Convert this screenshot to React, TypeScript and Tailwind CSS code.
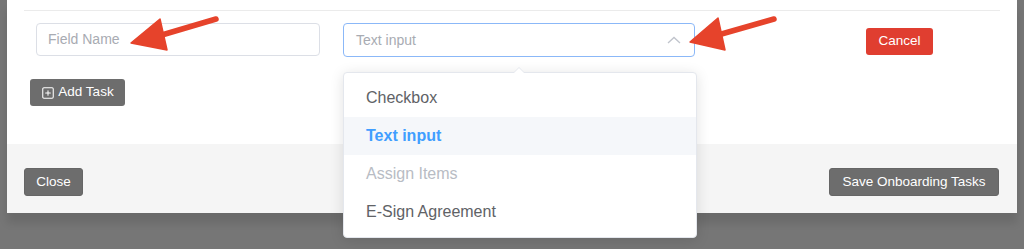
import { SquarePlus } from "lucide-react";

const font = { fontFamily: '"Liberation Sans", Arial, sans-serif' };

function Arrow({ tail, tip, left, right }: { tail: [number, number]; tip: [number, number]; left: [number, number]; right: [number, number] }) {
    const midX = (left[0] + right[0]) / 2;
    const midY = (left[1] + right[1]) / 2;
    return (
        <g fill="#e6432b" stroke="#e6432b">
            <line x1={tail[0]} y1={tail[1]} x2={midX} y2={midY} strokeWidth={5.5} strokeLinecap="round" />
            <polygon points={`${tip[0]},${tip[1]} ${left[0]},${left[1]} ${right[0]},${right[1]}`} strokeWidth={1.5} strokeLinejoin="round" />
        </g>
    );
}

export default function App() {
    return (
        <div className="relative h-[249px] w-[1024px] overflow-hidden bg-[#767676]" style={font}>
            {/* modal */}
            <div className="ml-[7px] w-[1010px] bg-white shadow-[0_10px_8px_rgba(0,0,0,0.1)]">
                <div className="px-[17px] pb-[38px]">
                    <div className="pt-[10px]">
                        <div className="h-px bg-[#ebebeb]" />
                    </div>
                    <div className="mt-[12px] flex items-start">
                        <div className="ml-[12px] flex h-[33px] w-[284px] items-center rounded-[4px] border border-[#dcdfe6] px-[11px] text-[14px] text-[#a8abb2]">
                            Field Name
                        </div>
                        <div className="ml-[23px] flex h-[34px] w-[352px] items-center justify-between rounded-[4px] border border-[#8bb8f8] pl-[12px] pr-[12px] text-[14px] text-[#a8abb2]">
                            <span>Text input</span>
                            <svg width="14" height="8" viewBox="0 0 14 8" className="mr-[1px]">
                                <polyline points="1,7 7,1.5 13,7" fill="none" stroke="#c0c4cc" strokeWidth="1.3" />
                            </svg>
                        </div>
                        <button
                            type="button"
                            className="ml-[171px] mt-[5px] flex h-[27px] w-[67px] items-center justify-center rounded-[3px] bg-[#e03e30] text-[13.5px] text-white"
                        >
                            Cancel
                        </button>
                    </div>
                    <button
                        type="button"
                        className="ml-[6px] mt-[22px] flex h-[27px] w-[95px] items-center justify-center gap-[3px] rounded-[3px] bg-[#6d6d6d] text-[13.5px] text-white"
                    >
                        <SquarePlus className="size-[14px]" strokeWidth={1.8} />
                        Add Task
                    </button>
                </div>
                <div className="flex h-[69px] items-start justify-between bg-[#f5f5f5] px-[17px] pr-[18px] pt-[24px]">
                    <button
                        type="button"
                        className="flex h-[28px] w-[59px] items-center justify-center rounded-[3px] border border-[#666] bg-[#6d6d6d] text-[13.5px] text-white"
                    >
                        Close
                    </button>
                    <button
                        type="button"
                        className="flex h-[28px] w-[170px] items-center justify-center rounded-[3px] border border-[#666] bg-[#6d6d6d] text-[13.5px] text-white"
                    >
                        Save Onboarding Tasks
                    </button>
                </div>
            </div>

            {/* select dropdown */}
            <div className="absolute left-[343px] top-[72px] w-[354px] rounded-[4px] border border-[#e4e7ed] bg-white py-[6px] shadow-[0_2px_14px_rgba(0,0,0,0.12)]">
                <div className="absolute -top-[6px] left-[169px] size-0 border-x-[6px] border-b-[6px] border-x-transparent border-b-[#e4e7ed]" />
                <div className="absolute -top-[5px] left-[169px] size-0 border-x-[6px] border-b-[6px] border-x-transparent border-b-white" />
                <div className="flex h-[38px] items-center px-[22px] text-[16px] text-[#606266]">Checkbox</div>
                <div className="flex h-[38px] items-center bg-[#f5f7fa] px-[22px] text-[16px] font-bold text-[#409eff]">Text input</div>
                <div className="flex h-[38px] items-center px-[22px] text-[16px] text-[#b8bcc4]">Assign Items</div>
                <div className="flex h-[38px] items-center px-[22px] text-[16px] text-[#606266]">E-Sign Agreement</div>
            </div>

            {/* annotation arrows */}
            <svg className="pointer-events-none absolute left-0 top-0" width="1024" height="249">
                <Arrow tail={[216, 19]} tip={[131, 43]} left={[160, 19]} right={[167, 50]} />
                <Arrow tail={[774, 19]} tip={[690, 42]} left={[718, 18]} right={[725, 50]} />
            </svg>
        </div>
    );
}
